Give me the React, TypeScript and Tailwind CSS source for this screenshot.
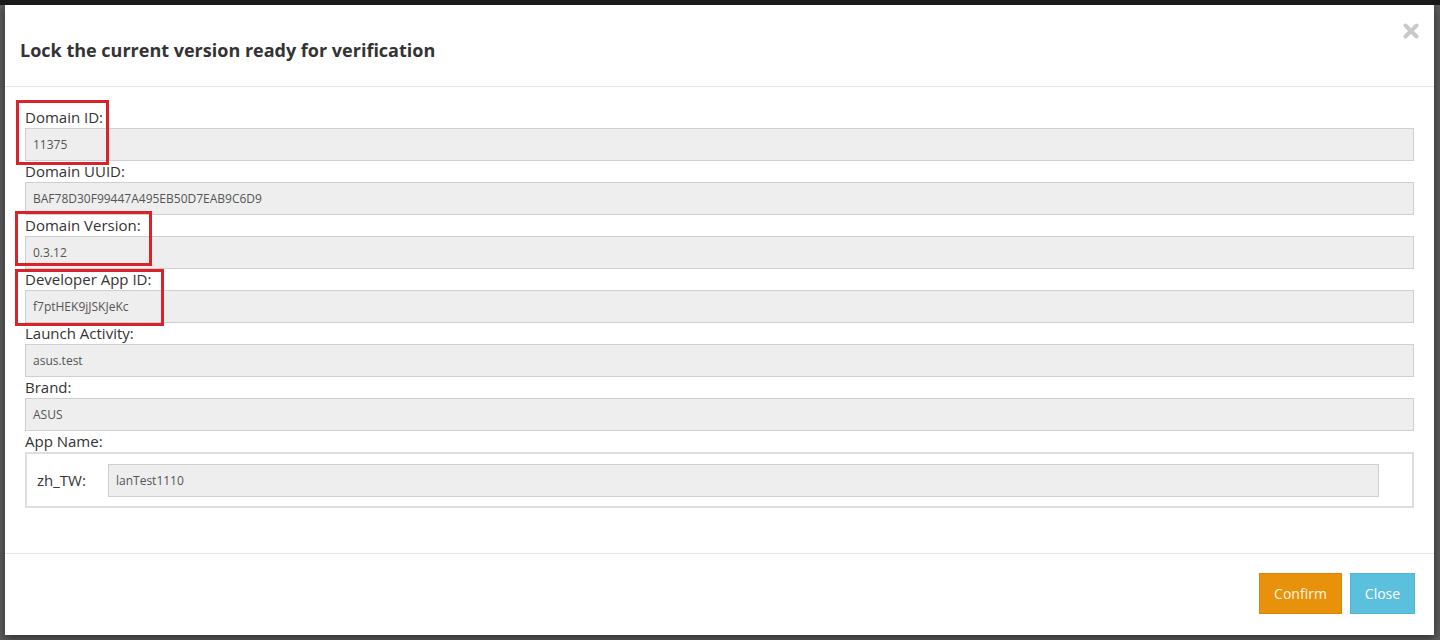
import React from "react";

const fields: { label: string; value: string }[] = [
  { label: "Domain ID:", value: "11375" },
  { label: "Domain UUID:", value: "BAF78D30F99447A495EB50D7EAB9C6D9" },
  { label: "Domain Version:", value: "0.3.12" },
  { label: "Developer App ID:", value: "f7ptHEK9jJSKJeKc" },
  { label: "Launch Activity:", value: "asus.test" },
  { label: "Brand:", value: "ASUS" },
];

export default function App() {
  return (
    <div
      className="relative w-[1440px] h-[640px] overflow-hidden bg-[#5b5b5b] border-t-[5px] border-[#1a1a1a]"
      style={{ fontFamily: '"Open Sans", "Noto Sans", sans-serif' }}
    >
      <div className="ml-[5px] w-[1429px] h-[630px] bg-white flex flex-col shadow-[0_3px_9px_rgba(0,0,0,0.5)]">
        {/* header */}
        <div className="h-[82px] border-b border-[#e5e5e5] px-[15px] pt-[33px] flex items-start justify-between">
          <h4 className="text-[18px] leading-[24px] font-bold text-[#333]">
            Lock the current version ready for verification
          </h4>
          <svg width="16" height="16" viewBox="0 0 16 16" className="-mt-[15px]">
            <path d="M2.5 2.5 L13.5 13.5 M13.5 2.5 L2.5 13.5" stroke="#c9c9c9" strokeWidth="4" strokeLinecap="round" />
          </svg>
        </div>

        {/* body */}
        <div className="flex-1 px-[20px] pt-[20px]">
          {fields.map((f) => (
            <div key={f.label}>
              <div className="h-[21px] text-[15px] leading-[21px] text-[#333]">{f.label}</div>
              <div className="h-[33px] bg-[#eeeeee] border border-[#cfcfcf] pl-[7px] flex items-center text-[12px] text-[#555]">
                {f.value}
              </div>
            </div>
          ))}
          <div className="h-[21px] text-[15px] leading-[21px] text-[#333]">App Name:</div>
          <div className="h-[56px] border-2 border-[#dedede] px-[10px] pt-[10px]">
            <div className="flex items-center">
              <div className="w-[71px] text-[15px] text-[#333]">zh_TW:</div>
              <div className="flex-1 mr-[23px] h-[33px] bg-[#eeeeee] border border-[#cfcfcf] pl-[7px] flex items-center text-[12px] text-[#555]">
                lanTest1110
              </div>
            </div>
          </div>
        </div>

        {/* footer */}
        <div className="h-[82px] border-t border-[#e5e5e5] pt-[19px] pr-[19px] flex justify-end items-start gap-[8px]">
          <button className="h-[41px] w-[83px] bg-[#e8910b] border border-[#d88508] text-[14px] text-[#fff6e0]">
            Confirm
          </button>
          <button className="h-[41px] w-[65px] bg-[#5bc0de] border border-[#52b5d3] text-[14px] text-white">
            Close
          </button>
        </div>
      </div>

      {/* red highlight boxes */}
      <div className="absolute left-[16px] top-[95px] w-[93px] h-[65px] border-[3px] border-[#d8232a]" />
      <div className="absolute left-[15px] top-[206px] w-[137px] h-[55px] border-[3px] border-[#d8232a]" />
      <div className="absolute left-[15px] top-[264px] w-[149px] h-[57px] border-[3px] border-[#d8232a]" />
    </div>
  );
}
